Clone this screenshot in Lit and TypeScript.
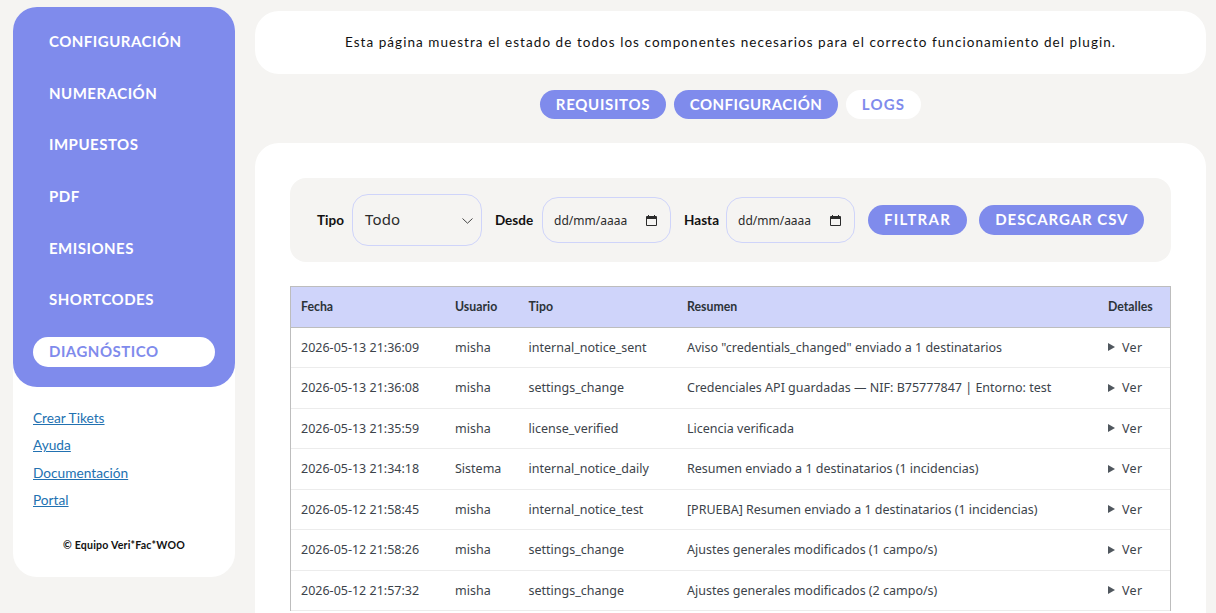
import { LitElement, html, css } from "lit";
import { customElement } from "lit/decorators.js";

const NAV = ["CONFIGURACIÓN", "NUMERACIÓN", "IMPUESTOS", "PDF", "EMISIONES", "SHORTCODES", "DIAGNÓSTICO"];
const LINKS = ["Crear Tikets", "Ayuda", "Documentación", "Portal"];
const ROWS = [
  ["2026-05-13 21:36:09", "misha", "internal_notice_sent", 'Aviso "credentials_changed" enviado a 1 destinatarios'],
  ["2026-05-13 21:36:08", "misha", "settings_change", "Credenciales API guardadas — NIF: B75777847 | Entorno: test"],
  ["2026-05-13 21:35:59", "misha", "license_verified", "Licencia verificada"],
  ["2026-05-13 21:34:18", "Sistema", "internal_notice_daily", "Resumen enviado a 1 destinatarios (1 incidencias)"],
  ["2026-05-12 21:58:45", "misha", "internal_notice_test", "[PRUEBA] Resumen enviado a 1 destinatarios (1 incidencias)"],
  ["2026-05-12 21:58:26", "misha", "settings_change", "Ajustes generales modificados (1 campo/s)"],
  ["2026-05-12 21:57:32", "misha", "settings_change", "Ajustes generales modificados (2 campo/s)"],
];

const calendar = html`<svg class="cal" viewBox="0 0 11 11" width="11" height="11" aria-hidden="true">
  <path fill="#2b2b2b" d="M2 0h1v1h5V0h1v1h1a1 1 0 0 1 1 1v8a1 1 0 0 1-1 1H1a1 1 0 0 1-1-1V2a1 1 0 0 1 1-1h1zM1 4v6h9V4z"/>
</svg>`;

@customElement("app-root")
export class AppRoot extends LitElement {
  static styles = css`
    :host {
      display: block;
      height: 613px;
      overflow: hidden;
      background: #f5f4f2;
      font-family: "Lato", sans-serif;
      color: #111;
    }
    .page {
      display: flex;
      align-items: flex-start;
      gap: 20px;
      padding: 7px 10px 0 13px;
    }
    .side {
      flex: 0 0 222px;
      width: 222px;
      height: 570px;
      background: #fff;
      border-radius: 24px;
      display: flex;
      flex-direction: column;
    }
    .nav {
      height: 380px;
      box-sizing: border-box;
      background: #7f8bec;
      border-radius: 24px;
      padding: 20.05px 20px 0;
      display: flex;
      flex-direction: column;
      gap: 21.7px;
    }
    .nav a {
      display: block;
      height: 30px;
      line-height: 29px;
      padding-left: 16px;
      border-radius: 15px;
      font-size: 15px;
      font-weight: 700;
      letter-spacing: 0.5px;
      color: #fff;
    }
    .nav a.on {
      background: #fff;
      color: #7f8bec;
    }
    .links {
      padding: 20px 20px 0;
      display: flex;
      flex-direction: column;
      gap: 8.3px;
    }
    .links div {
      height: 19px;
    }
    .links a {
      font-size: 13.7px;
      line-height: 19px;
      color: #2271b1;
      text-decoration: underline;
    }
    .copy {
      margin-top: 29px;
      text-align: center;
      font-size: 10.6px;
      font-weight: 700;
      line-height: 16px;
      letter-spacing: 0.2px;
    }
    .main {
      flex: 0 0 951px;
      width: 951px;
      padding-top: 4px;
    }
    .intro {
      height: 63px;
      box-sizing: border-box;
      padding-bottom: 2px;
      background: #fff;
      border-radius: 24px;
      display: flex;
      align-items: center;
      justify-content: center;
      font-size: 13.5px;
      letter-spacing: 1.05px;
    }
    .tabs {
      display: flex;
      justify-content: center;
      gap: 8px;
      margin-top: 16px;
    }
    .tabs a {
      box-sizing: border-box;
      height: 29px;
      line-height: 29px;
      text-align: center;
      border-radius: 15px;
      font-size: 15px;
      font-weight: 700;
      letter-spacing: 0.5px;
      background: #7f8bec;
      color: #fff;
    }
    .tabs a.req {
      width: 126px;
      letter-spacing: 0.7px;
    }
    .tabs a.conf {
      width: 164px;
    }
    .tabs a.on {
      width: 75px;
      letter-spacing: 1.2px;
      background: #fff;
      color: #7f8bec;
    }
    .card {
      margin-top: 24px;
      background: #fff;
      border-radius: 24px;
      padding: 35px 35px 40px;
    }
    .filters {
      height: 84px;
      box-sizing: border-box;
      background: #f5f4f2;
      border-radius: 16px;
      padding: 0 27px;
      display: flex;
      align-items: center;
    }
    .filters > * {
      flex: none;
    }
    .filters label {
      font-size: 13.5px;
      font-weight: 700;
      margin-right: 8px;
      padding-bottom: 1px;
    }
    .filters label.mid {
      margin-right: 9px;
    }
    .filters label.end {
      margin-right: 7px;
    }
    .select, .date {
      box-sizing: border-box;
      display: flex;
      align-items: center;
      justify-content: space-between;
      border: 1px solid #cfd4fa;
      border-radius: 16px;
      color: #2b2b2b;
    }
    .select {
      width: 130px;
      height: 52px;
      padding: 0 8px 2px 12px;
      margin-right: 13px;
      font-family: "Noto Sans", sans-serif;
      font-size: 15px;
      letter-spacing: 0.2px;
    }
    .select .chev {
      margin-top: 4px;
    }
    .date {
      width: 129px;
      height: 46px;
      padding: 0 13px 0 11px;
      margin-right: 13px;
      font-family: "Noto Sans", sans-serif;
      font-size: 12px;
    }
    .chev { display: block; }
    .cal { display: block; }
    .btn {
      height: 30px;
      line-height: 29px;
      padding: 0 16px;
      border-radius: 15px;
      background: #7f8bec;
      color: #fff;
      font-size: 15px;
      font-weight: 700;
      letter-spacing: 0.95px;
      margin-right: 12px;
      white-space: nowrap;
    }
    .btn.wide { letter-spacing: 1.3px; }
    table {
      margin-top: 24px;
      width: 881px;
      table-layout: fixed;
      border-collapse: separate;
      border-spacing: 0;
      border: 1px solid #bdbdbd;
      border-bottom: 0;
      font-family: "Noto Sans", sans-serif;
      font-size: 12.5px;
      color: #3c434a;
    }
    th {
      height: 38.8px;
      box-sizing: content-box;
      padding: 0 10px 1px;
      text-align: left;
      background: #cfd4fa;
      border-bottom: 1px solid #bdbdbd;
      font-family: "Lato", sans-serif;
      font-size: 12.3px;
      font-weight: 700;
      color: #2c3338;
    }
    td {
      height: 39.2px;
      padding: 0 10px 0.3px;
      border-bottom: 1px solid #ececec;
      white-space: nowrap;
    }
    .ver {
      display: flex;
      align-items: center;
      gap: 7px;
      letter-spacing: 0.3px;
    }
    .tri {
      width: 0;
      height: 0;
      border-left: 7px solid #50575e;
      border-top: 4px solid transparent;
      border-bottom: 4px solid transparent;
    }
  `;

  render() {
    return html`<div class="page">
      <aside class="side">
        <nav class="nav">
          ${NAV.map((n, i) => html`<a class=${i === 6 ? "on" : ""}>${n}</a>`)}
        </nav>
        <div class="links">${LINKS.map((l) => html`<div><a href="#">${l}</a></div>`)}</div>
        <div class="copy">© Equipo Veri*Fac*WOO</div>
      </aside>
      <main class="main">
        <div class="intro">Esta página muestra el estado de todos los componentes necesarios para el correcto funcionamiento del plugin.</div>
        <div class="tabs">
          <a class="req">REQUISITOS</a><a class="conf">CONFIGURACIÓN</a><a class="on">LOGS</a>
        </div>
        <section class="card">
          <div class="filters">
            <label>Tipo</label>
            <div class="select">
              <span>Todo</span>
              <svg class="chev" width="11" height="6" viewBox="0 0 11 6" aria-hidden="true"><path d="M0.500 0.500L5.500 5.200L10.500 0.500" fill="none" stroke="#444" stroke-width="1"/></svg>
            </div>
            <label class="mid">Desde</label>
            <div class="date"><span>dd/mm/aaaa</span>${calendar}</div>
            <label class="end">Hasta</label>
            <div class="date"><span>dd/mm/aaaa</span>${calendar}</div>
            <a class="btn wide">FILTRAR</a>
            <a class="btn">DESCARGAR CSV</a>
          </div>
          <table>
            <colgroup>
              <col style="width:154px" /><col style="width:73.5px" /><col style="width:158.5px" /><col style="width:421px" /><col style="width:72px" />
            </colgroup>
            <thead><tr><th>Fecha</th><th>Usuario</th><th>Tipo</th><th>Resumen</th><th>Detalles</th></tr></thead>
            <tbody>
              ${ROWS.map(
                (r) => html`<tr>
                  <td>${r[0]}</td><td>${r[1]}</td><td>${r[2]}</td><td>${r[3]}</td>
                  <td><div class="ver"><span class="tri"></span>Ver</div></td>
                </tr>`
              )}
            </tbody>
          </table>
        </section>
      </main>
    </div>`;
  }
}
